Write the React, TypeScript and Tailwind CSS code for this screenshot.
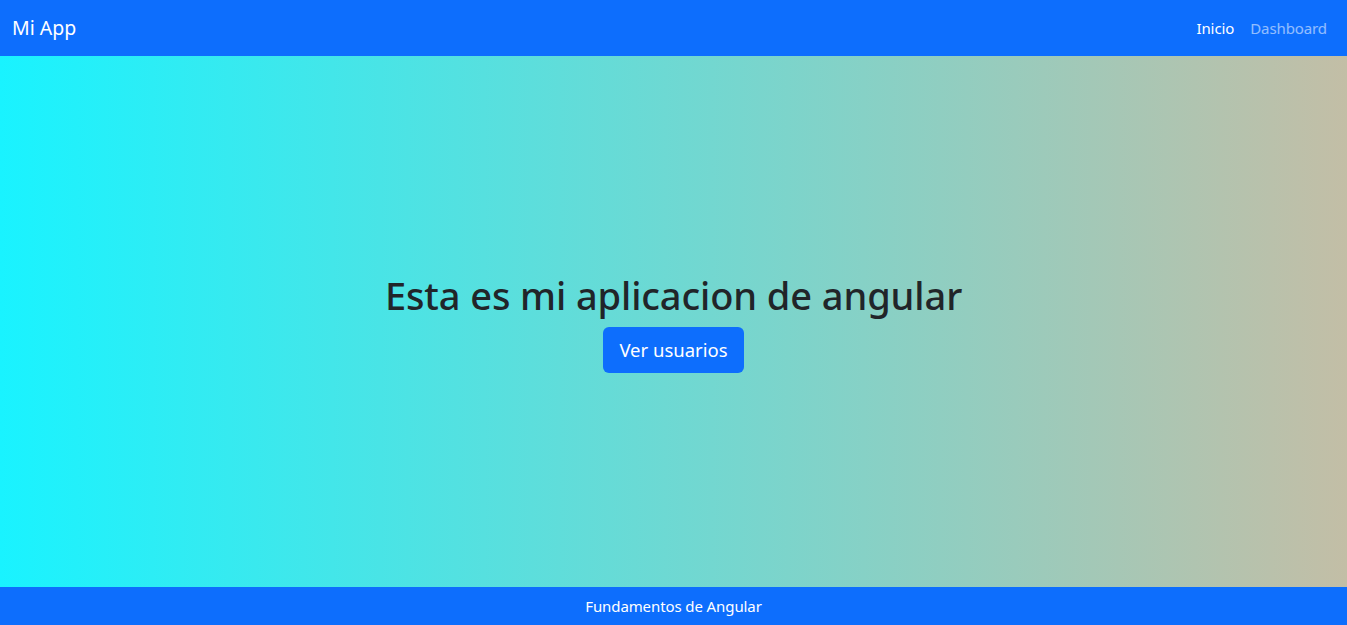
export default function App() {
  return (
    <div className="flex h-[625px] flex-col font-['Noto_Sans',sans-serif]">
      <nav className="flex h-14 shrink-0 items-center justify-between bg-[#0d6efd] px-3">
        <a className="text-[19.5px] leading-[30px] text-white">Mi App</a>
        <ul className="flex items-center">
          <li className="px-2 text-[15px] tracking-[-0.1px] text-white">Inicio</li>
          <li className="px-2 text-[15px] tracking-[-0.1px] text-white/55">Dashboard</li>
        </ul>
      </nav>

      <main className="flex flex-1 flex-col items-center justify-center bg-[linear-gradient(to_right,#19f3ff,#c3bea6)]">
        <h1 className="mb-2 text-[38px] font-medium leading-[48px] tracking-[-0.1px] text-[#212529]">
          Esta es mi aplicacion de angular
        </h1>
        <button className="rounded-md bg-[#0d6efd] px-4 py-2 text-[18.5px] leading-[30px] text-white">
          Ver usuarios
        </button>
      </main>

      <footer className="flex h-[38px] shrink-0 items-center justify-center bg-[#0d6efd] text-[15px] tracking-[-0.1px] text-white">
        Fundamentos de Angular
      </footer>
    </div>
  );
}
